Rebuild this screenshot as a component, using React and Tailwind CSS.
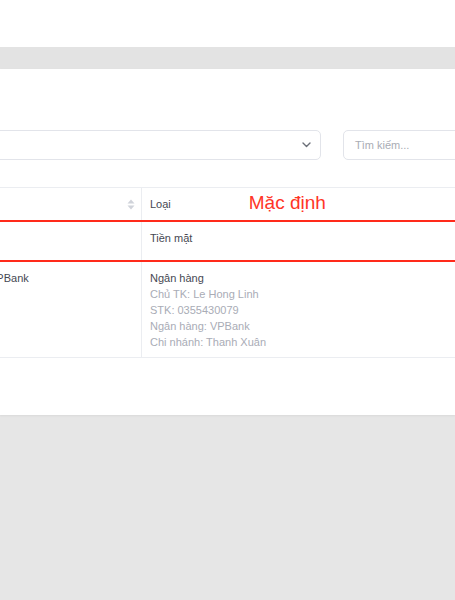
import React from 'react';

const font = { fontFamily: '"Liberation Sans", Arial, sans-serif' };

function SortIcon() {
  return (
    <svg width="8" height="11" viewBox="0 0 8 11" className="shrink-0">
      <path d="M4 0.5 L7.5 4.5 H0.5 Z" fill="#d0d3da" />
      <path d="M4 10.5 L7.5 6.5 H0.5 Z" fill="#d0d3da" />
    </svg>
  );
}

export default function App() {
  const bankLines = ['Chủ TK: Le Hong Linh', 'STK: 0355430079', 'Ngân hàng: VPBank', 'Chi nhánh: Thanh Xuân'];

  return (
    <div className="w-[455px] h-[600px] overflow-hidden bg-[#e6e6e6] flex flex-col" style={font}>
      {/* top bar */}
      <div className="h-[47px] bg-white shrink-0" />
      <div className="h-[22px] bg-[#e3e3e3] shrink-0" />

      {/* card */}
      <div className="h-[346px] bg-white shrink-0 shadow-[0_1px_2px_rgba(0,0,0,0.06)] pt-[61px]">
        {/* filters */}
        <div className="flex items-center gap-[22px]">
          <div className="-ml-[10px] w-[331px] h-[30px] shrink-0 border border-[#e2e4ea] rounded-[5px] flex items-center justify-end pr-[9px]">
            <svg width="9" height="6" viewBox="0 0 9 6">
              <path d="M1 1 L4.5 4.5 L8 1" stroke="#6b6f78" strokeWidth="1.4" fill="none" strokeLinecap="round" strokeLinejoin="round" />
            </svg>
          </div>
          <div className="w-[140px] h-[30px] shrink-0 border border-[#e2e4ea] rounded-[5px] flex items-center pl-[11px]">
            <span className="text-[11px] text-[#a9acb4]">Tìm kiếm...</span>
          </div>
        </div>

        {/* table */}
        <div className="mt-[27px] border-t border-[#ebedf1]">
          {/* header */}
          <div className="flex h-[32px]">
            <div className="w-[142px] shrink-0 border-r border-[#ebedf1] flex items-center justify-end pr-[6px]">
              <SortIcon />
            </div>
            <div className="flex-1 flex items-center pl-[8px] text-[11px] text-[#464852]">
              <span>Loại</span>
              <span className="ml-[78px] text-[19px] text-[#ff3527] -mt-[2px]">Mặc định</span>
            </div>
          </div>

          {/* row 1 (highlighted) */}
          <div className="flex h-[42px] border-y-2 border-[#ff2a1a]">
            <div className="w-[142px] shrink-0 border-r border-[#ebedf1]" />
            <div className="flex-1 pl-[8px] pt-[8px] text-[11px] leading-4 text-[#464852]">Tiền mặt</div>
          </div>

          {/* row 2 */}
          <div className="flex h-[96px] border-b border-[#ebedf1]">
            <div className="w-[142px] shrink-0 border-r border-[#ebedf1] pt-[8px] text-[11px] leading-4 text-[#464852]">
              <span className="-ml-[11px] block">VPBank</span>
            </div>
            <div className="flex-1 pl-[8px] pt-[8px] text-[11px] leading-4">
              <div className="text-[#464852]">Ngân hàng</div>
              {bankLines.map((l) => (
                <div key={l} className="text-[#a9acb6]">{l}</div>
              ))}
            </div>
          </div>
        </div>
      </div>
    </div>
  );
}
